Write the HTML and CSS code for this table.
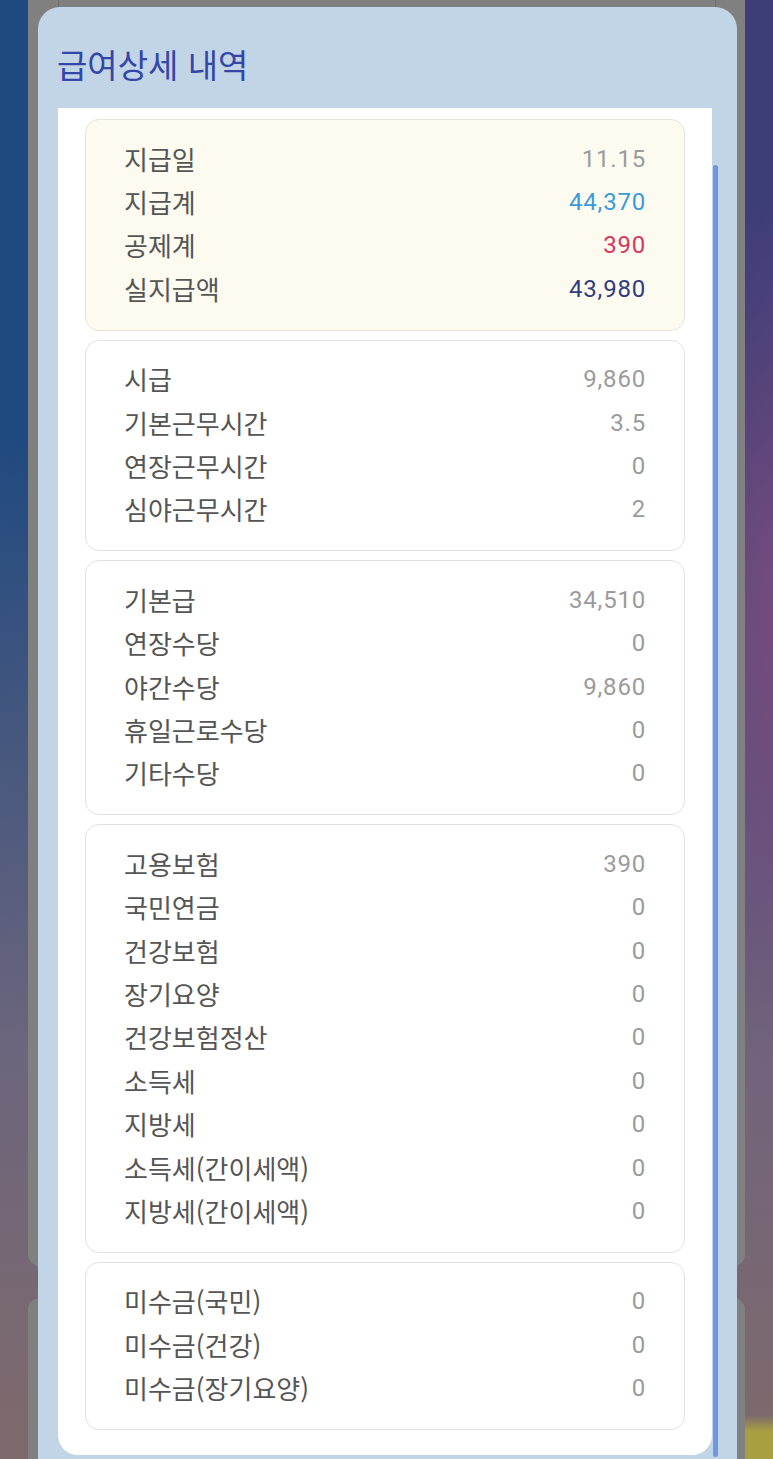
FILE: index.html
```html
<!DOCTYPE html>
<html lang="ko">
<head>
<meta charset="utf-8">
<title>급여상세 내역</title>
<link rel="stylesheet" href="styles.css">
</head>
<body>
<div class="page">
  <div class="bg-card bg-card-top"><div class="bg-inner"></div></div>
  <div class="bg-card bg-card-next"></div>
</div>

<div class="dialog">
  <h1 class="dialog-title">급여상세 내역</h1>
  <div class="panel">
    <section class="card card-summary">
      <div class="row"><span class="label">지급일</span><span class="value">11.15</span></div>
      <div class="row"><span class="label">지급계</span><span class="value value-pay">44,370</span></div>
      <div class="row"><span class="label">공제계</span><span class="value value-deduct">390</span></div>
      <div class="row"><span class="label">실지급액</span><span class="value value-net">43,980</span></div>
    </section>
    <section class="card">
      <div class="row"><span class="label">시급</span><span class="value">9,860</span></div>
      <div class="row"><span class="label">기본근무시간</span><span class="value">3.5</span></div>
      <div class="row"><span class="label">연장근무시간</span><span class="value">0</span></div>
      <div class="row"><span class="label">심야근무시간</span><span class="value">2</span></div>
    </section>
    <section class="card">
      <div class="row"><span class="label">기본급</span><span class="value">34,510</span></div>
      <div class="row"><span class="label">연장수당</span><span class="value">0</span></div>
      <div class="row"><span class="label">야간수당</span><span class="value">9,860</span></div>
      <div class="row"><span class="label">휴일근로수당</span><span class="value">0</span></div>
      <div class="row"><span class="label">기타수당</span><span class="value">0</span></div>
    </section>
    <section class="card">
      <div class="row"><span class="label">고용보험</span><span class="value">390</span></div>
      <div class="row"><span class="label">국민연금</span><span class="value">0</span></div>
      <div class="row"><span class="label">건강보험</span><span class="value">0</span></div>
      <div class="row"><span class="label">장기요양</span><span class="value">0</span></div>
      <div class="row"><span class="label">건강보험정산</span><span class="value">0</span></div>
      <div class="row"><span class="label">소득세</span><span class="value">0</span></div>
      <div class="row"><span class="label">지방세</span><span class="value">0</span></div>
      <div class="row"><span class="label">소득세(간이세액)</span><span class="value">0</span></div>
      <div class="row"><span class="label">지방세(간이세액)</span><span class="value">0</span></div>
    </section>
    <section class="card">
      <div class="row"><span class="label">미수금(국민)</span><span class="value">0</span></div>
      <div class="row"><span class="label">미수금(건강)</span><span class="value">0</span></div>
      <div class="row"><span class="label">미수금(장기요양)</span><span class="value">0</span></div>
    </section>
  </div>
  <div class="scrollbar"></div>
</div>
</body>
</html>
```

FILE: styles.css
```css
html, body {
  margin: 0;
  height: 1459px;
  overflow: hidden;
}

body {
  position: relative;
  font-family: "Noto Sans CJK KR", "Noto Sans", sans-serif;
  background:
    linear-gradient(to bottom, rgba(170,160,60,0) 1415px, rgba(168,160,64,1) 1432px) right top / 28px 100% no-repeat,
    radial-gradient(ellipse 160px 420px at 790px 620px, rgba(120,76,126,1), rgba(120,76,126,0)),
    linear-gradient(to bottom, rgba(122,106,124,0) 30%, rgba(122,106,124,0.85) 72%, rgba(126,106,108,1) 100%),
    linear-gradient(to right, #1f4a80 0%, #3e3d78 100%);
}

.page {
  padding: 0 28px;
}

.bg-card {
  background: #808080;
}

.bg-card-top {
  height: 1266px;
  border-radius: 0 0 12px 12px;
}

.bg-inner {
  margin: 0 29px 0 30px;
  height: 8px;
  border-left: 1px solid #6c6c6c;
  border-right: 1px solid #6c6c6c;
}

.bg-card-next {
  margin-top: 32px;
  height: 200px;
  border-radius: 12px;
}

.dialog {
  position: absolute;
  top: 7px;
  left: 38px;
  width: 699px;
  height: 1480px;
  background: #c2d5e6;
  border-radius: 22px 22px 0 0;
}

.dialog-title {
  margin: 0;
  padding: 37px 0 0 19px;
  height: 64px;
  font-size: 33px;
  line-height: 40px;
  font-weight: 400;
  color: #3446a8;
}

.panel {
  width: 654px;
  margin-left: 20px;
  box-sizing: border-box;
  background: #ffffff;
  border-radius: 0 0 20px 20px;
  padding: 11px 27px 25px;
  display: flex;
  flex-direction: column;
  gap: 9px;
}

.card {
  border: 1px solid #e2e2e2;
  border-radius: 14px;
  background: #ffffff;
  padding: 17px 38px 19px;
}

.card-summary {
  background: #fdfbef;
  border-color: #e6e3d8;
}

.row {
  display: flex;
  justify-content: space-between;
  align-items: center;
  height: 43.4px;
}

.label {
  font-size: 26px;
  line-height: 30px;
  color: #555555;
}

.value {
  font-family: Roboto, "Noto Sans", sans-serif;
  font-size: 24px;
  line-height: 30px;
  letter-spacing: 0.8px;
  color: #9b9b9b;
}

.value-pay { color: #3a9bd8; }
.value-deduct { color: #d83560; }
.value-net { color: #2f3d80; }

.scrollbar {
  position: absolute;
  left: 675px;
  top: 158px;
  width: 5px;
  height: 1292px;
  border-radius: 3px;
  background: #6f96e2;
}
```
